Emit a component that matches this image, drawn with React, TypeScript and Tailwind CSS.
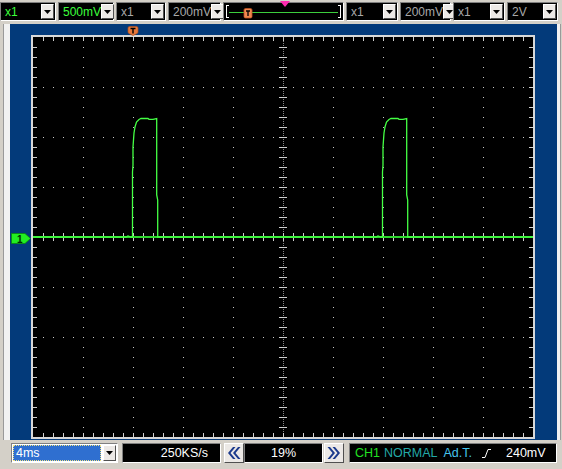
import React from "react";

const font = "font-['Liberation_Sans',Arial,sans-serif]";

function DropBtn() {
  return (
    <div className="w-[13px] h-full bg-[#ece9e6] border-t border-l border-t-white border-l-white border-b border-r border-b-[#505050] border-r-[#505050] flex items-center justify-center shrink-0">
      <svg width="7" height="4" viewBox="0 0 7 4">
        <path d="M0 0H7L3.5 4Z" fill="#000" />
      </svg>
    </div>
  );
}

function Combo({ w, text, green }: { w: string; text: string; green?: boolean }) {
  return (
    <div
      className={`${w} h-[19px] flex border-t border-l border-t-[#808080] border-l-[#808080] border-b border-r border-b-white border-r-white bg-black pr-[1px] py-[1px]`}
    >
      <div
        className={`flex-1 flex items-center pl-[4px] text-[12px] leading-none ${
          green ? "text-[#3cff3c]" : "text-[#a8a8a8]"
        }`}
      >
        {text}
      </div>
      <DropBtn />
    </div>
  );
}

function TrigSlider() {
  return (
    <div className="w-[121px] h-[19px] relative bg-black border-t border-l border-t-[#808080] border-l-[#808080] border-b border-r border-b-white border-r-white">
      <div className="absolute left-[2px] top-[2px] w-[3px] h-[13px] border-l border-t border-b border-white" />
      <div className="absolute right-[2px] top-[2px] w-[3px] h-[13px] border-r border-t border-b border-white" />
      <div className="absolute left-[5px] right-[5px] top-[9px] h-[1px] bg-[#3ccf3c]" />
      <svg className="absolute left-[19px] top-[5px]" width="10" height="11" viewBox="0 0 10 11">
        <path d="M1 2 Q1 0.5 2.5 0.5 H7.5 Q9 0.5 9 2 V8.5 Q9 10 7.5 10 H2.5 Q1 10 1 8.5Z" fill="#f08850" stroke="#c05020" strokeWidth="0.8" />
        <path d="M3 3 H7 M5 3 V8" stroke="#000" strokeWidth="1.3" />
      </svg>
      <svg className="absolute left-[56px] top-[-2px]" width="10" height="6" viewBox="0 0 10 6">
        <path d="M0 0 H10 L5 6Z" fill="#ff2ab0" />
      </svg>
    </div>
  );
}

function Plot() {
  const dots: React.ReactNode[] = [];
  for (let k = 1; k < 8; k++) {
    const y = k * 50;
    for (let x = 10; x < 500; x += 10) {
      if (k === 4) continue;
      dots.push(<rect key={`h${k}-${x}`} x={x} y={y} width="1" height="1" fill="#c8c8c8" />);
    }
  }
  for (let k = 1; k < 10; k++) {
    const x = k * 50;
    for (let y = 10; y < 400; y += 10) {
      if (k === 5) continue;
      if (y % 50 === 0) continue;
      dots.push(<rect key={`v${k}-${y}`} x={x} y={y} width="1" height="1" fill="#c8c8c8" />);
    }
  }
  const center: React.ReactNode[] = [];
  for (let y = 0; y < 400; y += 2) {
    center.push(<rect key={`c${y}`} x={250} y={y} width="1" height="1" fill="#8a8a8a" />);
  }
  const ticks: React.ReactNode[] = [];
  for (let x = 10; x < 500; x += 10) {
    ticks.push(<rect key={`tt${x}`} x={x} y={0} width="1" height="4" fill="#d0d0d0" />);
    ticks.push(<rect key={`tb${x}`} x={x} y={396} width="1" height="4" fill="#d0d0d0" />);
    ticks.push(<rect key={`tc${x}`} x={x} y={196} width="1" height="8" fill="#d0d0d0" />);
  }
  for (let y = 10; y < 400; y += 10) {
    ticks.push(<rect key={`tl${y}`} x={0} y={y} width="4" height="1" fill="#d0d0d0" />);
    ticks.push(<rect key={`tr${y}`} x={496} y={y} width="4" height="1" fill="#d0d0d0" />);
    ticks.push(<rect key={`tv${y}`} x={246} y={y} width="8" height="1" fill="#d0d0d0" />);
  }
  const pulse = (o: number) =>
    `H${93 + o} L${95 + o},199 L${98 + o},200 H${99.5 + o} V135 L${100 + o},128 V110 L${101 + o},96 L${102 + o},90 L${103.5 + o},85 L${106 + o},82.5 L${108 + o},81.5 H${115 + o} L${116 + o},82.3 H${120 + o} L${123.7 + o},81.5 V158 L${124.7 + o},163 V200 `;
  const d = `M0,200 ${pulse(0)}${pulse(250)}H500`;
  return (
    <svg width="500" height="400" viewBox="0 0 500 400" className="block">
      <rect width="500" height="400" fill="#000" />
      {dots}
      {center}
      {ticks}
      <rect x="0" y="199" width="500" height="2" fill="#2ed62e" />
      <path d={d} fill="none" stroke="#44ff44" strokeWidth="1.3" />
    </svg>
  );
}

function ArrowBtn({ dir }: { dir: "l" | "r" }) {
  return (
    <div className="w-[20px] h-[20px] bg-[#ece9e6] border-t border-l border-t-white border-l-white border-b border-r border-b-[#505050] border-r-[#505050] flex items-center justify-center">
      <svg width="14" height="14" viewBox="0 0 14 14">
        {dir === "l" ? (
          <>
            <path d="M6 1 L1 7 L6 13 H8.5 L3.5 7 L8.5 1Z" fill="#1b3a8c" />
            <path d="M11 1 L6 7 L11 13 H13.5 L8.5 7 L13.5 1Z" fill="#1b3a8c" />
          </>
        ) : (
          <>
            <path d="M8 1 L13 7 L8 13 H5.5 L10.5 7 L5.5 1Z" fill="#1b3a8c" />
            <path d="M3 1 L8 7 L3 13 H0.5 L5.5 7 L0.5 1Z" fill="#1b3a8c" />
          </>
        )}
      </svg>
    </div>
  );
}

export default function App() {
  return (
    <div className={`w-[562px] h-[469px] bg-[#d4d0c8] overflow-hidden flex flex-col ${font}`}>
      {/* top bar */}
      <div className="h-[24px] flex gap-[2px] pt-[2px] shrink-0">
        <Combo w="w-[56px]" text="x1" green />
        <Combo w="w-[56px]" text="500mV" green />
        <Combo w="w-[50px]" text="x1" />
        <Combo w="w-[53px]" text="200mV" />
        <TrigSlider />
        <Combo w="w-[52px]" text="x1" />
        <Combo w="w-[51px]" text="200mV" />
        <Combo w="w-[52px]" text="x1" />
        <Combo w="w-[51px]" text="2V" />
      </div>

      {/* middle */}
      <div className="flex h-[416px] shrink-0">
        <div className="flex w-[10px]">
          <div className="w-[3px] bg-[#d4d0c8]" />
          <div className="w-[1px] bg-[#9a9a9a]" />
          <div className="w-[6px] bg-[#f2f2f2]" />
        </div>
        <div className="w-[547px] relative bg-[#033a7a] pl-[21px] pt-[11px]">
          <div className="w-[504px] h-[404px] border-2 border-[#d8d8d8]">
            <Plot />
          </div>
          {/* trigger position marker */}
          <svg className="absolute left-[117px] top-[2px]" width="12" height="10" viewBox="0 0 12 10">
            <path d="M1 2 Q1 0.5 2.5 0.5 H9.5 Q11 0.5 11 2 V6 Q11 7 10 7.5 L6 9.5 L2 7.5 Q1 7 1 6Z" fill="#e8783a" stroke="#b05020" strokeWidth="0.7" />
            <path d="M3.5 2.5 H8.5 M6 2.5 V7.5" stroke="#000" strokeWidth="1.4" />
          </svg>
          {/* channel 1 marker */}
          <svg className="absolute left-[1px] top-[209px]" width="20" height="11" viewBox="0 0 20 11">
            <path d="M0.5 0.5 H14 L19.5 5.5 L14 10.5 H0.5Z" fill="#22ee22" stroke="#0a8a0a" strokeWidth="0.8" />
            <text x="6" y="9.5" fontSize="10" fontFamily="Liberation Sans, Arial, sans-serif" fontWeight="bold" fill="#003000">1</text>
          </svg>
        </div>
        <div className="flex w-[5px]">
          <div className="w-[3px] bg-[#f2f2f2]" />
          <div className="w-[1px] bg-[#9a9a9a]" />
          <div className="w-[1px] bg-[#d4d0c8]" />
        </div>
      </div>

      {/* bottom bar */}
      <div className="flex-1 flex items-start pt-[3px] pl-[11px] text-[12.5px] leading-none">
        <div className="w-[107px] h-[20px] flex border-t border-l border-t-[#808080] border-l-[#808080] border-b border-r border-b-white border-r-white bg-white p-[1px]">
          <div className="flex-1 bg-[#2f6fd0] border border-dotted border-[#f0e080] flex items-center pl-[2px] text-white mr-[2px]">
            4ms
          </div>
          <DropBtn />
        </div>
        <div className="ml-[4px] w-[99px] h-[20px] bg-black border-t border-l border-t-[#808080] border-l-[#808080] border-b border-r border-b-white border-r-white flex items-center justify-end pr-[12px] text-white">
          250KS/s
        </div>
        <div className="ml-[3px]">
          <ArrowBtn dir="l" />
        </div>
        <div className="w-[79px] h-[20px] bg-black border-t border-l border-t-[#808080] border-l-[#808080] border-b border-r border-b-white border-r-white flex items-center justify-center text-white">
          19%
        </div>
        <div className="ml-[1px]">
          <ArrowBtn dir="r" />
        </div>
        <div className="ml-[5px] w-[208px] h-[20px] bg-black border-t border-l border-t-[#808080] border-l-[#808080] border-b border-r border-b-white border-r-white flex items-center pl-[5px] whitespace-pre">
          <span className="text-[#22e022]">CH1</span>
          <span className="ml-[4px] text-[#23a8a8]">NORMAL</span>
          <span className="ml-[6px] text-[#46c4ee]">Ad.T.</span>
          <svg className="ml-[10px]" width="9" height="10" viewBox="0 0 9 10">
            <path d="M0 9.5 H3 L6 1.5 H9" stroke="#fff" strokeWidth="1" fill="none" />
          </svg>
          <span className="ml-[15px] text-white">240mV</span>
        </div>
      </div>
    </div>
  );
}
